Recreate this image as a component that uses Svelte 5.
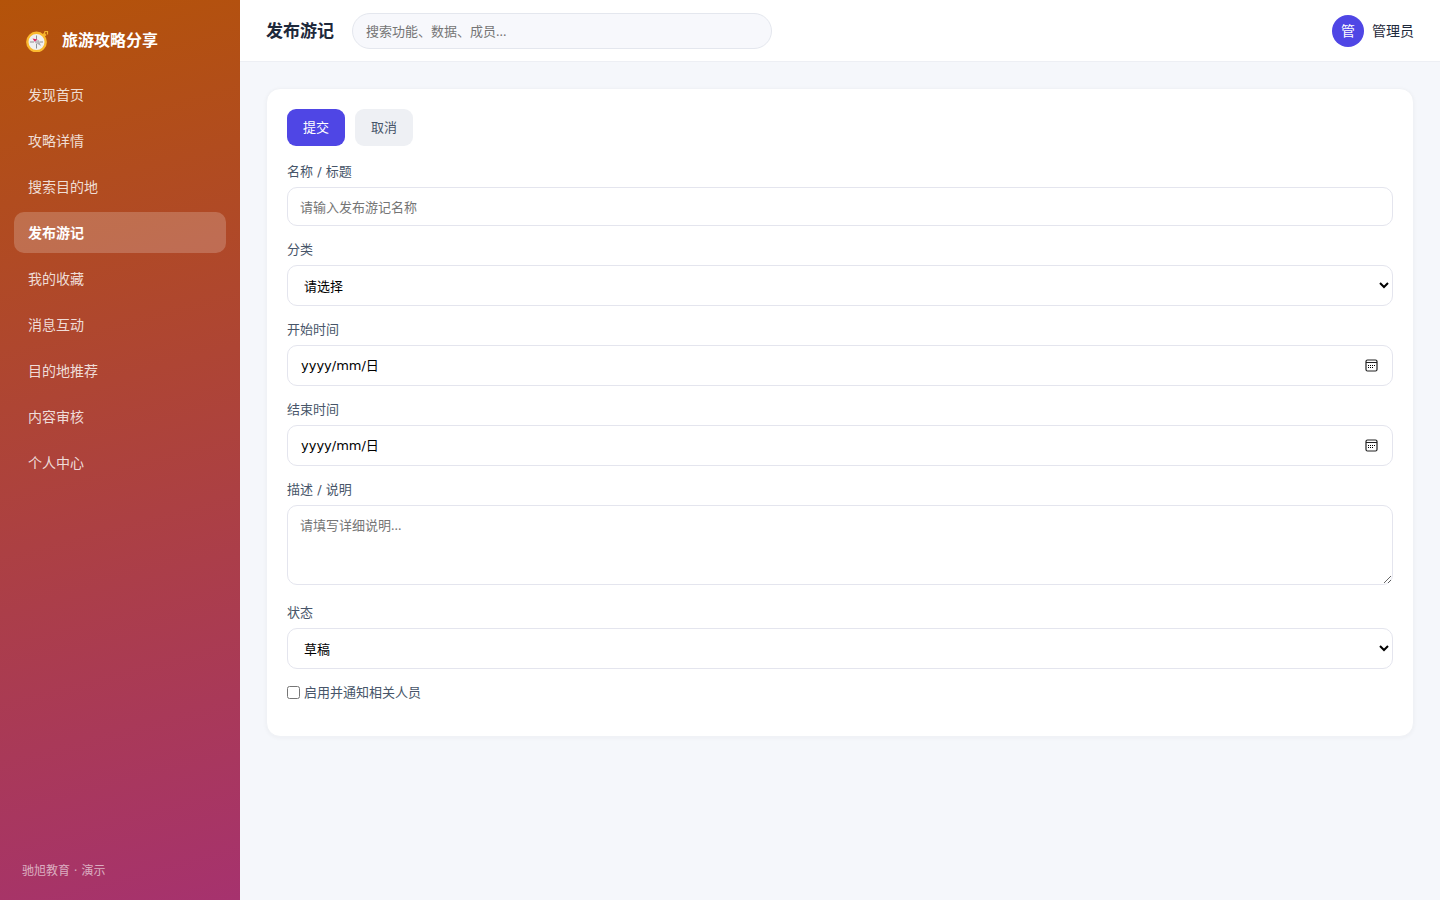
<script>
  const navItems = ['发现首页', '攻略详情', '搜索目的地', '发布游记', '我的收藏', '消息互动', '目的地推荐', '内容审核', '个人中心'];
  let active = $state('发布游记');
  let start = $state('');
  let end = $state('');
</script>

<div class="app">
  <aside>
    <div class="brand">
      <svg class="logo" viewBox="0 0 24 24" aria-hidden="true">
        <path d="M18.5 5 19 3.500 21.500 3.500 21.500 6.500" fill="none" stroke="#f5b32c" stroke-width="1.2" />
        <path d="M16 6.500 18.500 4.500 20.500 7 18.500 9z" fill="#f5b32c" />
        <circle cx="10.5" cy="14" r="9.2" fill="#f0eff0" stroke="#fbb92f" stroke-width="2.4" />
        <path d="M10.5 7.5v4M10.5 16v4.5M4 14h4M13.5 14h3.500" stroke="#8f8f92" stroke-width="1" />
        <path d="M9 14.500 12.500 12l2.500 6z" fill="#a9a9ad" />
        <path d="M6.500 10.500 11.500 11.500 9 14z" fill="#dc2560" />
        <circle cx="11" cy="14" r="1.8" fill="#bdbdc2" />
      </svg>
      <span>旅游攻略分享</span>
    </div>
    <nav>
      {#each navItems as item}
        <a href="#top" class:active={active === item} onclick={(e) => { e.preventDefault(); active = item; }}>{item}</a>
      {/each}
    </nav>
    <div class="copy">驰旭教育 · 演示</div>
  </aside>

  <div class="body">
    <header>
      <h1>发布游记</h1>
      <input class="search" type="search" aria-label="搜索" placeholder="搜索功能、数据、成员..." />
      <div class="user">
        <span class="avatar">管</span>
        <span>管理员</span>
      </div>
    </header>

    <main>
      <form class="card" onsubmit={(e) => e.preventDefault()}>
        <div class="actions">
          <button type="submit" class="primary">提交</button>
          <button type="button">取消</button>
        </div>

        <div class="field">
          <label for="title">名称 / 标题</label>
          <input id="title" class="text" type="text" placeholder="请输入发布游记名称" />
        </div>
        <div class="field">
          <label for="category">分类</label>
          <select id="category"><option>请选择</option></select>
        </div>
        <div class="field">
          <label for="start">开始时间</label>
          <div class="date" class:empty={!start}>
            <input id="start" type="date" bind:value={start} />
            {#if !start}<span class="hint">yyyy/mm/日</span>{/if}
          </div>
        </div>
        <div class="field">
          <label for="end">结束时间</label>
          <div class="date" class:empty={!end}>
            <input id="end" type="date" bind:value={end} />
            {#if !end}<span class="hint">yyyy/mm/日</span>{/if}
          </div>
        </div>
        <div class="field notes">
          <label for="notes">描述 / 说明</label>
          <textarea id="notes" placeholder="请填写详细说明..."></textarea>
        </div>
        <div class="field">
          <label for="status">状态</label>
          <select id="status"><option>草稿</option></select>
        </div>
        <label class="check"><input type="checkbox" /><span>启用并通知相关人员</span></label>
      </form>
    </main>
  </div>
</div>

<style>
  :global(body) {
    margin: 0;
  }

  .app,
  .app * {
    box-sizing: border-box;
  }

  .app {
    display: flex;
    min-height: 100vh;
    background: #f5f7fb;
    color: #1e293b;
    font: 14px/21px 'Noto Sans', 'Noto Sans CJK SC', sans-serif;
  }

  input,
  select,
  textarea,
  button {
    font: inherit;
  }

  aside {
    display: flex;
    flex-direction: column;
    flex: none;
    width: 240px;
    padding: 22px 14px 18px;
    color: #fff;
    background: linear-gradient(165deg, #b45309, #a6326e);
  }

  .brand {
    display: flex;
    align-items: center;
    gap: 12px;
    height: 36px;
    margin-bottom: 16px;
    padding: 0 12px;
    font-size: 16px;
    font-weight: 700;
  }

  .logo {
    width: 24px;
    height: 24px;
  }

  nav {
    display: flex;
    flex-direction: column;
    gap: 5px;
  }

  nav a {
    padding: 10px 14px;
    border-radius: 10px;
    color: rgba(255, 255, 255, 0.82);
    text-decoration: none;
  }

  nav a.active {
    background: rgba(255, 255, 255, 0.2);
    color: #fff;
    font-weight: 700;
  }

  .copy {
    margin-top: auto;
    padding: 0 8px;
    font-family: 'DejaVu Sans', 'Noto Sans CJK SC', sans-serif;
    font-size: 12px;
    color: rgba(255, 255, 255, 0.6);
  }

  .body {
    flex: 1;
    min-width: 0;
  }

  header {
    display: flex;
    align-items: center;
    gap: 18px;
    height: 62px;
    padding: 0 26px;
    background: #fff;
    border-bottom: 1px solid #edeff4;
  }

  h1 {
    margin: 0;
    font-size: 17px;
    font-weight: 700;
  }

  .search {
    width: 420px;
    height: 36px;
    padding: 0 13px;
    border: 1px solid #e4e7ee;
    border-radius: 18px;
    background: #f7f8fc;
    font-size: 13px;
    appearance: none;
  }

  ::placeholder {
    color: #757575;
  }

  .user {
    display: flex;
    align-items: center;
    gap: 8px;
    margin-left: auto;
  }

  .avatar {
    display: grid;
    place-items: center;
    width: 32px;
    height: 32px;
    border-radius: 50%;
    background: #4f46e5;
    color: #fff;
  }

  main {
    padding: 26px;
  }

  .card {
    padding: 20px;
    border: 1px solid #f0f2f6;
    border-radius: 14px;
    background: #fff;
    box-shadow: 0 1px 4px rgba(15, 23, 42, 0.04);
    font-size: 13px;
    line-height: 19px;
  }

  .actions {
    display: flex;
    gap: 10px;
    margin-bottom: 16px;
  }

  button {
    padding: 9px 16px;
    border: 0;
    border-radius: 9px;
    background: #eef0f4;
    color: #475569;
    cursor: pointer;
  }

  .primary {
    background: #4f46e5;
    color: #fff;
  }

  .field {
    display: flex;
    flex-direction: column;
    gap: 6px;
    margin-bottom: 14px;
    color: #475569;
  }

  .field label {
    font-family: 'DejaVu Sans', 'Noto Sans CJK SC', sans-serif;
  }

  .notes {
    margin-bottom: 18px;
  }

  .text,
  select,
  .date input,
  textarea {
    width: 100%;
    padding: 0 12px;
    border: 1px solid #e4e5ee;
    border-radius: 10px;
    background: #fff;
    color: #000;
  }

  .text {
    height: 39px;
  }

  select,
  .date input {
    display: block;
    height: 41px;
  }

  .date {
    position: relative;
  }

  .date.empty input::-webkit-datetime-edit {
    opacity: 0;
  }

  .date input::-webkit-calendar-picker-indicator {
    background: url("data:image/svg+xml,%3Csvg xmlns='http://www.w3.org/2000/svg' viewBox='0 0 13 13'%3E%3Crect x='1' y='1' width='11' height='11' rx='1.5' fill='none' stroke='%23222' stroke-width='1.2'/%3E%3Cpath d='M1 3.5h11' stroke='%23222'/%3E%3Cpath d='M5 6.5h1M7 6.5h1M9 6.5h1M3 6.5h1M3 8.5h1M5 8.5h1M7 8.5h1' stroke='%23000' stroke-width='1'/%3E%3C/svg%3E") center / 13px 13px no-repeat;
  }

  .hint {
    position: absolute;
    top: 11px;
    left: 14px;
    color: #000;
    font-family: 'DejaVu Sans', 'Noto Sans CJK SC', sans-serif;
    pointer-events: none;
  }

  textarea {
    height: 80px;
    padding: 10px 12px;
    resize: vertical;
  }

  .check {
    display: flex;
    align-items: center;
    gap: 4px;
    margin-bottom: 14px;
    color: #475569;
  }

  .check input {
    width: 13px;
    height: 13px;
    margin: 0;
  }
</style>
